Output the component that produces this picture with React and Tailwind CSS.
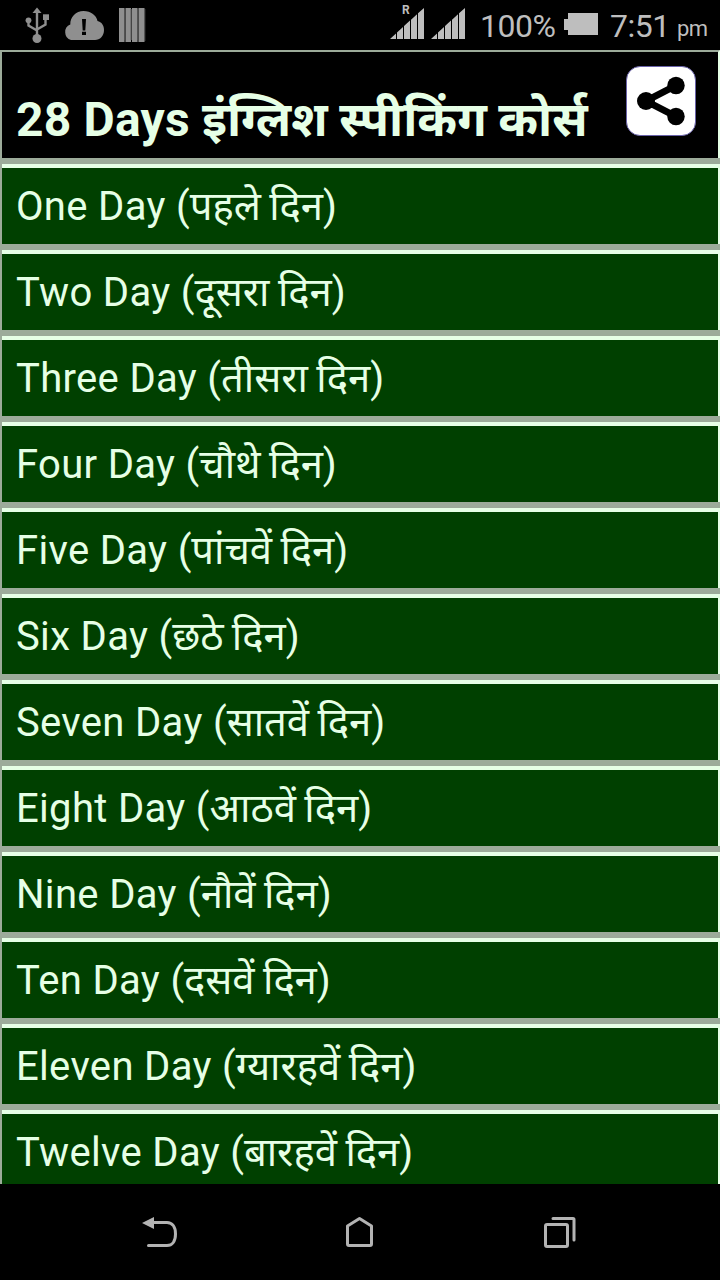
const days = [
  ['One Day', 'पहले दिन'],
  ['Two Day', 'दूसरा दिन'],
  ['Three Day', 'तीसरा दिन'],
  ['Four Day', 'चौथे दिन'],
  ['Five Day', 'पांचवें दिन'],
  ['Six Day', 'छठे दिन'],
  ['Seven Day', 'सातवें दिन'],
  ['Eight Day', 'आठवें दिन'],
  ['Nine Day', 'नौवें दिन'],
  ['Ten Day', 'दसवें दिन'],
  ['Eleven Day', 'ग्यारहवें दिन'],
  ['Twelve Day', 'बारहवें दिन'],
];

function Signal() {
  return (
    <svg className="h-8 w-[35px] shrink-0" viewBox="0 0 35 32" fill="#bebebe">
      <path d="M0 31 6 25.5V31zM7 24.6l6-5.5V31H7zM14 18.1l6-5.5V31h-6zM21 11.7l6-5.5V31h-6zM28 5.3 34 0v31h-6z" />
    </svg>
  );
}

function StatusBar() {
  return (
    <header className="flex h-[50px] shrink-0 items-start bg-black text-[#bebebe]">
      <svg className="h-[50px] w-[160px] shrink-0" viewBox="0 0 160 50">
        <g fill="none" stroke="#8f8f8f" strokeWidth="2.4">
          <path d="M37 12v27M28.5 21v4.500l8.500 5M45.500 19v5.500L37 29.500" />
        </g>
        <g fill="#8f8f8f">
          <path d="M37 7.500 32.500 13h9z" />
          <circle cx="28.500" cy="20.300" r="2.900" />
          <path d="M43 14.300h6v5.700h-6z" />
          <circle cx="37" cy="38.500" r="4.500" />
          <path d="M71 40a7.200 8 0 0 1-.7-15.500C70 17 76 11 83.500 11S96.500 15.500 97.500 21c4.200 1 6.500 4.500 6.500 9 0 6-4 10-9 10z" />
          <path d="M119 8h5.500v34H119zM125.500 8h5.500v34h-5.500zM132 8h5.500v34H132zM138.500 8h6v34h-6z" />
        </g>
        <path d="M124.700 9v31M131.200 9v31M137.700 9v31M144.700 9v32" stroke="#555" strokeWidth="1.200" />
        <path d="M82 19h4l-.7 11.500h-2.600zM82 31.800h4v3.200h-4z" fill="#000" />
      </svg>
      <div className="relative ml-[230px] pt-2">
        <Signal />
        <span className="absolute top-[3px] left-[12px] font-['Roboto',sans-serif] text-[12px] leading-[14px] font-bold">R</span>
      </div>
      <div className="ml-[6px] pt-2">
        <Signal />
      </div>
      <span className="ml-[14px] w-[84px] shrink-0 pt-[7px] font-['Roboto',sans-serif] text-[32px] leading-[38px] font-normal tracking-[-0.5px] whitespace-nowrap">100%</span>
      <svg className="mt-[13px] h-[22px] w-[34px] shrink-0" viewBox="0 0 34 22" fill="#bebebe">
        <path d="M4 0h30v22H4v-5H0V6h4z" />
      </svg>
      <span className="ml-[12px] w-[67px] shrink-0 pt-[7px] font-['Roboto',sans-serif] text-[32px] leading-[38px] font-normal tracking-[-0.5px] whitespace-nowrap">7:51</span>
      <span className="pt-[15px] font-['Roboto',sans-serif] text-[22px] leading-[28px] font-normal tracking-[-0.5px]">pm</span>
    </header>
  );
}

function TitleBar() {
  return (
    <div className="flex h-[108px] shrink-0 border-t-2 border-r-2 border-l-2 border-t-[#9cab9a] border-r-[#e6ffe6] border-l-[#9cab9a] bg-black pl-[14px]">
      <h1 className="flex-1 pt-[38px] font-['Roboto','Noto_Sans',sans-serif] text-[48px] leading-[60px] font-bold whitespace-nowrap text-[#e6ffe6]">
        <span className="tracking-[0.2px]">28 Days </span>
        <span className="[word-spacing:-0.5px]">इंग्लिश स्पीकिंग कोर्स</span>
      </h1>
      <button aria-label="Share" className="mt-[14px] mr-[22px] h-[70px] w-[70px] shrink-0">
        <svg className="h-[70px] w-[70px]" viewBox="0 0 70 70">
          <rect x=".5" y=".5" width="69" height="69" rx="13.500" fill="#fff" stroke="#6962a8" />
          <path d="M50 19.500 20 35l30 15.500" fill="none" stroke="#000" strokeWidth="7" />
          <circle cx="50" cy="19.500" r="8.700" />
          <circle cx="20" cy="35" r="9" />
          <circle cx="50" cy="50.500" r="8.700" />
        </svg>
      </button>
    </div>
  );
}

function DayRow({ english, hindi }) {
  return (
    <li className="h-[86px] shrink-0 border-t-[6px] border-[#9cab9a]">
      <div className="h-[80px] border-l-2 border-[#9cab9a]">
        <div className="h-[80px] border-t-4 border-r-2 border-[#e6ffe6] bg-[#004000] pl-[14px] font-['Roboto','Noto_Sans',sans-serif] text-[40px] leading-[78px] whitespace-nowrap text-[#e6ffe6]">
          <span className="tracking-[0.33px]">{english} </span>
          <span className="[word-spacing:-1.5px]">({hindi})</span>
        </div>
      </div>
    </li>
  );
}

function NavBar() {
  return (
    <nav className="flex h-24 shrink-0 items-center justify-center bg-black">
      <div className="flex w-[600px] justify-between">
        <button aria-label="Back" className="flex w-[200px] justify-center">
          <svg className="h-24 w-20" viewBox="0 0 80 96">
            <path d="m22 39 12-6v12z" fill="#b3b3b3" />
            <path d="M33 38.500h14c5 0 8.500 4 8.500 11.500S52 61.500 47 61.500H28.500" fill="none" stroke="#b3b3b3" strokeWidth="3" strokeLinecap="round" />
          </svg>
        </button>
        <button aria-label="Home" className="flex w-[200px] justify-center">
          <svg className="h-24 w-20" viewBox="0 0 80 96">
            <path d="M27.500 42 39.500 34.500 51.500 42v18q0 1.500-1.500 1.500H29q-1.500 0-1.500-1.500z" fill="none" stroke="#b3b3b3" strokeWidth="3" strokeLinejoin="round" />
          </svg>
        </button>
        <button aria-label="Recent apps" className="flex w-[200px] justify-center">
          <svg className="h-24 w-20" viewBox="0 0 80 96" fill="none" stroke="#b3b3b3" strokeWidth="3" strokeLinecap="round">
            <rect x="25.500" y="40.500" width="22" height="22" rx="1.500" />
            <path d="M33 34.500h20q1 0 1 1V56" />
          </svg>
        </button>
      </div>
    </nav>
  );
}

export default function App() {
  return (
    <div className="flex h-[1280px] w-[720px] flex-col overflow-hidden bg-black">
      <StatusBar />
      <TitleBar />
      <ul className="flex min-h-0 flex-1 flex-col overflow-hidden">
        {days.map(([english, hindi]) => (
          <DayRow key={english} english={english} hindi={hindi} />
        ))}
      </ul>
      <NavBar />
    </div>
  );
}
